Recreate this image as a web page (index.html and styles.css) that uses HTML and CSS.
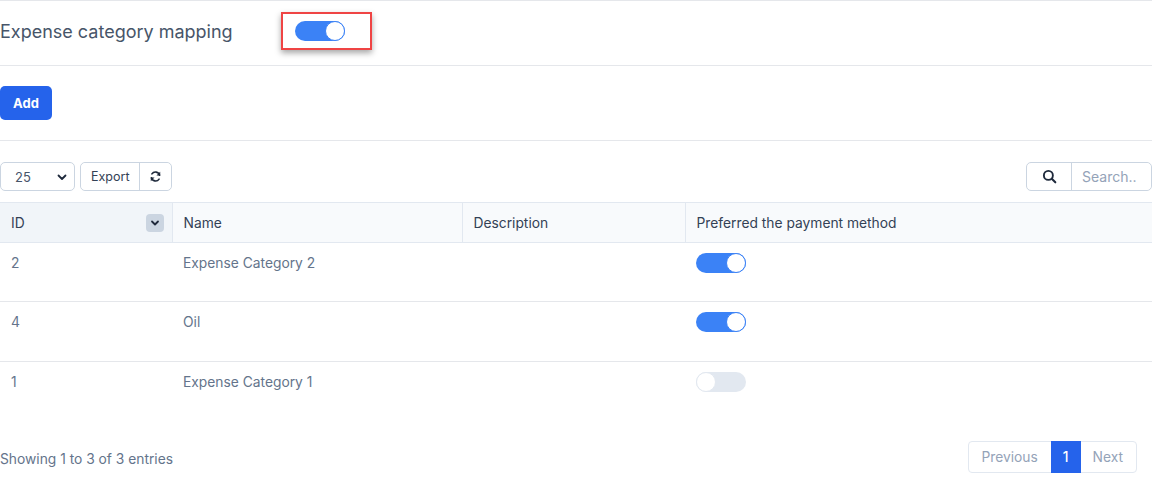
FILE: index.html
```html
<!DOCTYPE html>
<html lang="en">
  <head>
    <meta charset="UTF-8" />
    <meta name="viewport" content="width=device-width, initial-scale=1.0" />
    <title>Expense category mapping</title>
    <link rel="stylesheet" href="styles.css">
  </head>
  <body>
    <div class="page">
      <section class="setting-row">
        <h1 class="setting-title">Expense category mapping</h1>
        <div class="highlight">
          <span class="switch on"><span class="knob"></span></span>
        </div>
      </section>

      <section class="actions">
        <button class="btn-primary">Add</button>
      </section>

      <section class="table-wrap">
        <div class="toolbar">
          <div class="toolbar-left">
            <div class="select-box">
              <span>25</span>
              <svg width="12" height="12" viewBox="0 0 12 12"><path d="M2.5 4.5 6 8l3.5-3.5" fill="none" stroke="#1e293b" stroke-width="1.8" stroke-linecap="round" stroke-linejoin="round"/></svg>
            </div>
            <div class="btn-group">
              <button class="btn-light">Export</button>
              <button class="btn-light btn-icon">
                <svg width="13" height="13" viewBox="0 0 16 16"><path d="M13 6.5A5.2 5.2 0 0 0 3.6 4.8M3 9.5a5.2 5.2 0 0 0 9.4 1.7" fill="none" stroke="#1e293b" stroke-width="2" stroke-linecap="round"/><path d="M13.8 2.2v4.6H9.2zM2.2 13.8V9.2h4.6z" fill="#1e293b"/></svg>
              </button>
            </div>
          </div>
          <div class="search-group">
            <span class="search-icon">
              <svg width="15" height="15" viewBox="0 0 16 16"><circle cx="6.8" cy="6.8" r="4.8" fill="none" stroke="#1e293b" stroke-width="2"/><path d="m10.4 10.4 3.8 3.8" stroke="#1e293b" stroke-width="2.2" stroke-linecap="round"/></svg>
            </span>
            <input class="search-input" type="text" placeholder="Search..">
          </div>
        </div>

        <table class="data-table">
          <thead>
            <tr>
              <th class="col-id">
                <div class="th-sort">
                  <span>ID</span>
                  <span class="sort-btn">
                    <svg width="10" height="10" viewBox="0 0 10 10"><path d="M2 3.5 5 6.5l3-3" fill="none" stroke="#1e293b" stroke-width="1.8" stroke-linecap="round" stroke-linejoin="round"/></svg>
                  </span>
                </div>
              </th>
              <th class="col-name">Name</th>
              <th class="col-desc">Description</th>
              <th>Preferred the payment method</th>
            </tr>
          </thead>
          <tbody>
            <tr>
              <td>2</td>
              <td>Expense Category 2</td>
              <td></td>
              <td><span class="switch on"><span class="knob"></span></span></td>
            </tr>
            <tr>
              <td>4</td>
              <td>Oil</td>
              <td></td>
              <td><span class="switch on"><span class="knob"></span></span></td>
            </tr>
            <tr>
              <td>1</td>
              <td>Expense Category 1</td>
              <td></td>
              <td><span class="switch"><span class="knob"></span></span></td>
            </tr>
          </tbody>
        </table>

        <div class="table-footer">
          <span class="info">Showing 1 to 3 of 3 entries</span>
          <div class="pagination">
            <span class="page-link disabled">Previous</span>
            <span class="page-link active">1</span>
            <span class="page-link disabled">Next</span>
          </div>
        </div>
      </section>
    </div>
  </body>
</html>
```

FILE: styles.css
```css
body {
  font-family: Inter, "Noto Sans", sans-serif;
  background-color: #fff;
  color: #475569;
  margin: 0;
  padding: 0;
}

.page {
  width: 1152px;
}

.setting-row {
  display: flex;
  align-items: center;
  height: 60px;
  padding-bottom: 4px;
  border-top: 1px solid #e5e7eb;
  border-bottom: 1px solid #e5e7eb;
}

.setting-title {
  font-size: 18px;
  font-weight: 400;
  color: #475569;
  margin: 0;
  width: 281px;
}

.highlight {
  border: 2px solid #ef4444;
  padding: 7px 25px 7px 12px;
  box-shadow: 0 3px 6px rgba(0, 0, 0, 0.35);
  display: flex;
}

.switch {
  display: inline-block;
  position: relative;
  width: 50px;
  height: 20px;
  border-radius: 10px;
  background-color: #e2e8f0;
  box-sizing: border-box;
}

.switch .knob {
  position: absolute;
  top: 0;
  left: 0;
  width: 20px;
  height: 20px;
  border-radius: 50%;
  background-color: #fff;
  border: 1px solid #e2e8f0;
  box-sizing: border-box;
}

.switch.on {
  background-color: #3b82f6;
}

.switch.on .knob {
  left: 30px;
  border-color: #3b82f6;
}

.actions {
  padding: 20px 0;
  border-bottom: 1px solid #e5e7eb;
}

.btn-primary {
  background-color: #2563eb;
  color: #fff;
  border: none;
  border-radius: 5px;
  font-family: inherit;
  font-size: 13px;
  font-weight: 700;
  width: 52px;
  height: 34px;
  cursor: pointer;
}

.table-wrap {
  padding-top: 21px;
}

.toolbar {
  display: flex;
  justify-content: space-between;
  align-items: center;
  margin-bottom: 11px;
}

.toolbar-left {
  display: flex;
  gap: 5px;
}

.select-box {
  width: 75px;
  height: 29px;
  box-sizing: border-box;
  border: 1px solid #cbd5e1;
  border-radius: 5px;
  display: flex;
  align-items: center;
  justify-content: space-between;
  padding: 0 6px 0 14px;
  font-size: 13px;
  color: #475569;
}

.btn-group {
  display: flex;
  border: 1px solid #cbd5e1;
  border-radius: 5px;
  height: 29px;
  box-sizing: border-box;
}

.btn-light {
  background: #fff;
  border: none;
  border-radius: 5px;
  font-family: inherit;
  font-size: 12.5px;
  color: #334155;
  padding: 0 10px;
  cursor: pointer;
}

.btn-icon {
  border-left: 1px solid #cbd5e1;
  border-radius: 0 5px 5px 0;
  width: 32px;
  padding: 0;
  display: flex;
  align-items: center;
  justify-content: center;
}

.search-group {
  display: flex;
  border: 1px solid #cbd5e1;
  border-radius: 5px;
  height: 29px;
  box-sizing: border-box;
}

.search-icon {
  width: 44px;
  display: flex;
  align-items: center;
  justify-content: center;
  border-right: 1px solid #cbd5e1;
}

.search-input {
  width: 79px;
  border: none;
  outline: none;
  font-family: inherit;
  font-size: 14px;
  padding: 0 10px;
  box-sizing: border-box;
  border-radius: 0 5px 5px 0;
}

.search-input::placeholder {
  color: #94a3b8;
}

.data-table {
  width: 100%;
  border-collapse: collapse;
  font-size: 13.8px;
}

.data-table th {
  background-color: #f8fafc;
  font-weight: 400;
  color: #334155;
  text-align: left;
  height: 40px;
  padding: 0 11px;
  border-top: 1px solid #e2e8f0;
  border-bottom: 1px solid #e2e8f0;
  border-left: 1px solid #e2e8f0;
  box-sizing: border-box;
}

.data-table th:first-child {
  border-left: none;
  background-color: #f1f5f9;
}

.col-id {
  width: 172px;
}

.col-name {
  width: 290px;
}

.col-desc {
  width: 223px;
}

.th-sort {
  display: flex;
  justify-content: space-between;
  align-items: center;
}

.sort-btn {
  width: 18px;
  height: 18px;
  border-radius: 4px;
  background-color: #cbd5e1;
  display: flex;
  align-items: center;
  justify-content: center;
  margin-right: -3px;
}

.data-table td {
  height: 60px;
  padding: 10px 11px 0;
  vertical-align: top;
  color: #64748b;
  border-bottom: 1px solid #e5e7eb;
  box-sizing: border-box;
  line-height: 20px;
}

.data-table tbody tr:first-child td {
  height: 59px;
}

.data-table tbody tr:last-child td {
  border-bottom: none;
}

.table-footer {
  display: flex;
  justify-content: space-between;
  align-items: center;
  margin-top: 19px;
  padding-right: 15px;
}

.info {
  font-size: 13.8px;
  color: #64748b;
  margin-top: 4px;
}

.pagination {
  display: flex;
  border: 1px solid #e2e8f0;
  border-radius: 4px;
  height: 32px;
  box-sizing: border-box;
}

.page-link {
  display: flex;
  align-items: center;
  padding: 0 13px 0 12px;
  font-size: 13.8px;
  color: #94a3b8;
}

.page-link.active {
  background-color: #2563eb;
  color: #fff;
  padding: 0 12px;
  font-weight: 500;
  margin: -1px 0;
}
```
